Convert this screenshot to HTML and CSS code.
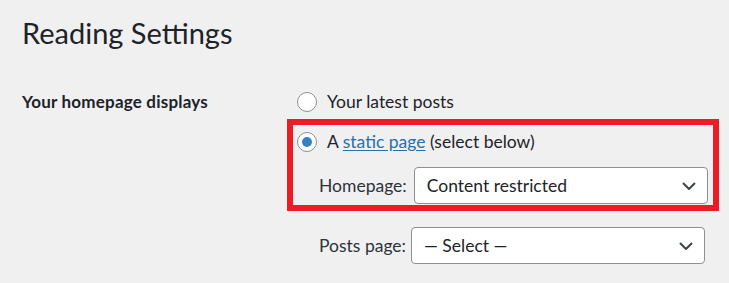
FILE: index.html
```html
<!DOCTYPE html>
<html lang="en">
<head>
<meta charset="utf-8">
<title>Reading Settings</title>
<link rel="stylesheet" href="styles.css">
</head>
<body>
<div class="wrap">
  <h1 class="title">Reading Settings</h1>
  <div class="form-row">
    <div class="row-label">Your homepage displays</div>
    <div class="row-field">
      <label class="radio-line">
        <span class="radio"></span>
        <span>Your latest posts</span>
      </label>
      <div class="highlight">
        <label class="radio-line">
          <span class="radio checked"></span>
          <span>A <a class="link" href="#">static page</a> (select below)</span>
        </label>
        <div class="select-line home">
          <span class="select-label">Homepage:</span>
          <div class="select">
            <span>Content restricted</span>
            <svg class="chevron" viewBox="0 0 14 8" width="14" height="8"><path d="M1 1 L7 7 L13 1"/></svg>
          </div>
        </div>
      </div>
      <div class="select-line posts">
        <span class="select-label">Posts page:</span>
        <div class="select">
          <span>— Select —</span>
          <svg class="chevron" viewBox="0 0 14 8" width="14" height="8"><path d="M1 1 L7 7 L13 1"/></svg>
        </div>
      </div>
    </div>
  </div>
</div>
</body>
</html>
```
FILE: styles.css
```css
html, body {
  margin: 0;
  padding: 0;
  background: #f0f0f1;
}
body {
  font-family: "Lato", "Open Sans", sans-serif;
  font-size: 17.5px;
  line-height: 24px;
  color: #1d2327;
  overflow: hidden;
}
.wrap {
  padding: 15px 0 0 22px;
}
.title {
  margin: 0;
  font-size: 29px;
  font-weight: 400;
  line-height: 35px;
}
.form-row {
  margin-top: 40px;
  display: grid;
  grid-template-columns: 275px 1fr;
}
.row-label {
  font-weight: 700;
  font-size: 17px;
  letter-spacing: 0.2px;
}
.row-field {
  display: flex;
  flex-direction: column;
}
.radio-line {
  display: flex;
  align-items: center;
  gap: 10px;
  height: 24px;
}
.radio {
  width: 20px;
  height: 20px;
  box-sizing: border-box;
  border: 1px solid #8c8f94;
  border-radius: 50%;
  background: #fff;
  display: flex;
  align-items: center;
  justify-content: center;
  flex: none;
}
.radio.checked::after {
  content: "";
  width: 10px;
  height: 10px;
  border-radius: 50%;
  background: #3582c4;
}
.link {
  color: #2271b1;
  text-decoration: underline;
  text-underline-offset: 2px;
}
.highlight {
  margin: 5px 0 0 -10px;
  width: 432px;
  box-sizing: border-box;
  border: 6px solid #ed1c24;
  padding: 5px 0 1px 4px;
}
.select-line {
  display: flex;
  align-items: center;
  gap: 5px;
  margin: 13px 0 0 22px;
}
.select-line.home {
  gap: 7px;
}
.select-line.posts {
  margin-top: 16px;
}
.select-label {
  color: #2c3338;
}
.select {
  width: 294px;
  height: 37px;
  box-sizing: border-box;
  border: 1px solid #8c8f94;
  border-radius: 4px;
  background: #fff;
  display: flex;
  align-items: center;
  justify-content: space-between;
  padding: 0 11px 0 12px;
}
.chevron {
  fill: none;
  stroke: #3c434a;
  stroke-width: 2;
}
```
